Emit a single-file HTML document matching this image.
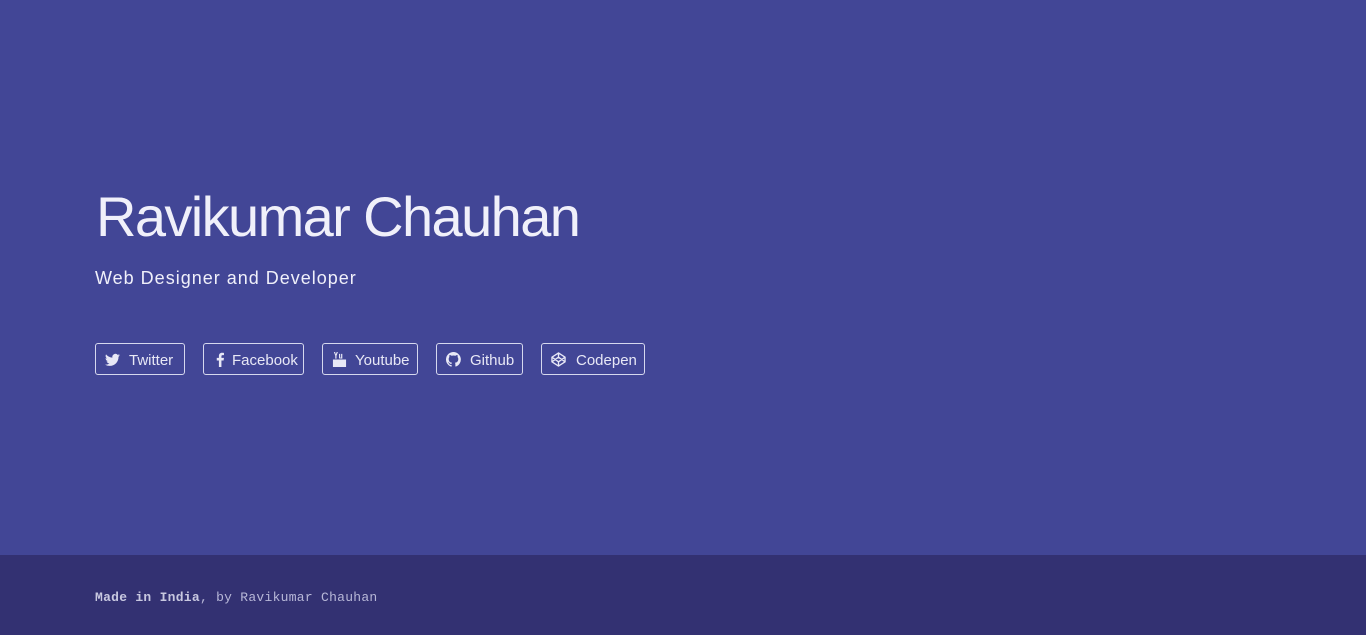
<!DOCTYPE html>
<html><head><meta charset="utf-8"><style>
*{margin:0;padding:0;box-sizing:border-box}
body{width:1366px;height:635px;overflow:hidden;background:#424696;font-family:"Liberation Sans",sans-serif;color:#f0f0fa;position:relative}
h1{position:absolute;left:96px;top:182px;font-size:56px;font-weight:normal;letter-spacing:-1.6px;line-height:70px;white-space:nowrap}
h2{position:absolute;left:95px;top:266px;font-size:18px;font-weight:normal;line-height:24px;letter-spacing:1px}
.b{position:absolute;top:343px;height:32px;border:1px solid #d6d8ee;border-radius:3px;font-size:15px;line-height:33px;color:#e8e8f6;padding-left:33px;white-space:nowrap}
.b svg{position:absolute;left:9px;top:8px;width:15px;height:15px;fill:#e8e8f6}
footer{position:absolute;left:0;top:555px;width:1366px;height:80px;background:#333172;font-family:"Liberation Mono",monospace;font-size:13px;letter-spacing:0.27px;color:#b8b8d8;padding:35px 0 0 95px}
footer b{color:#c8c8e0}
</style></head><body>
<h1>Ravikumar Chauhan</h1>
<h2>Web Designer and Developer</h2>
<div class="b" style="left:95px;width:90px"><svg viewBox="0 0 16 16"><path d="M16 3.5a6.5 6.5 0 0 1-1.9.5 3.3 3.3 0 0 0 1.4-1.8 6.5 6.5 0 0 1-2 .8A3.3 3.3 0 0 0 7.900 6 9.300 9.300 0 0 1 1.100 2.500a3.300 3.300 0 0 0 1 4.400 3.300 3.300 0 0 1-1.500-.400 3.300 3.300 0 0 0 2.600 3.200 3.300 3.300 0 0 1-1.500.100 3.300 3.300 0 0 0 3.100 2.300A6.600 6.600 0 0 1 0 13.400 9.300 9.300 0 0 0 5 14.800c6 0 9.400-5 9.400-9.400v-.400A6.700 6.700 0 0 0 16 3.500z"/></svg>Twitter</div>
<div class="b" style="left:203px;width:101px;padding-left:28px"><svg viewBox="0 0 16 16"><path d="M9 16V9h2.3l.4-2.7H9V4.6c0-.8.2-1.3 1.3-1.3h1.4V.9A19 19 0 0 0 9.7.8C7.7.8 6.3 2 6.3 4.3v2H4V9h2.3v7z"/></svg>Facebook</div>
<div class="b" style="left:322px;width:96px;padding-left:32px"><svg viewBox="0 0 16 16"><path d="M2 0h1.3l.8 2.5L5 0h1.3L4.8 4v3H3.5V4zM7.5 2h1.2v4h1V2H11v5H9.7v-.5C9 7.2 7.5 7.3 7.5 6zM1 8h14v8H1z"/></svg>Youtube</div>
<div class="b" style="left:436px;width:87px"><svg viewBox="0 0 16 16"><path d="M8 0a8 8 0 0 0-2.5 15.6c.4 0 .5-.2.5-.4v-1.5c-2.2.5-2.7-1-2.7-1-.4-.9-.9-1.200-.9-1.200-.7-.5.100-.5.100-.5.800.100 1.200.800 1.200.800.700 1.300 1.900.900 2.300.700.100-.5.300-.900.500-1.100-1.800-.200-3.600-.900-3.600-4 0-.900.300-1.600.800-2.100-.100-.200-.400-1 .100-2.100 0 0 .700-.200 2.200.800a7.500 7.500 0 0 1 4 0c1.500-1 2.200-.800 2.200-.800.400 1.100.200 1.900.100 2.100.500.600.800 1.300.800 2.100 0 3.100-1.900 3.800-3.600 4 .300.300.500.800.500 1.500v2.200c0 .200.100.500.600.400A8 8 0 0 0 8 0z"/></svg>Github</div>
<div class="b" style="left:541px;width:104px;padding-left:34px"><svg viewBox="0 0 16 16" style="fill:none;stroke:#e8e8f6;stroke-width:1.4;stroke-linejoin:round"><path d="M8 1l7 4.5v5L8 15l-7-4.5v-5zM8 1v4.5M8 10.5V15M1 5.5l7 5 7-5M1 10.5l7-5 7 5"/></svg>Codepen</div>
<footer><b>Made in India</b>, by Ravikumar Chauhan</footer>
</body></html>
